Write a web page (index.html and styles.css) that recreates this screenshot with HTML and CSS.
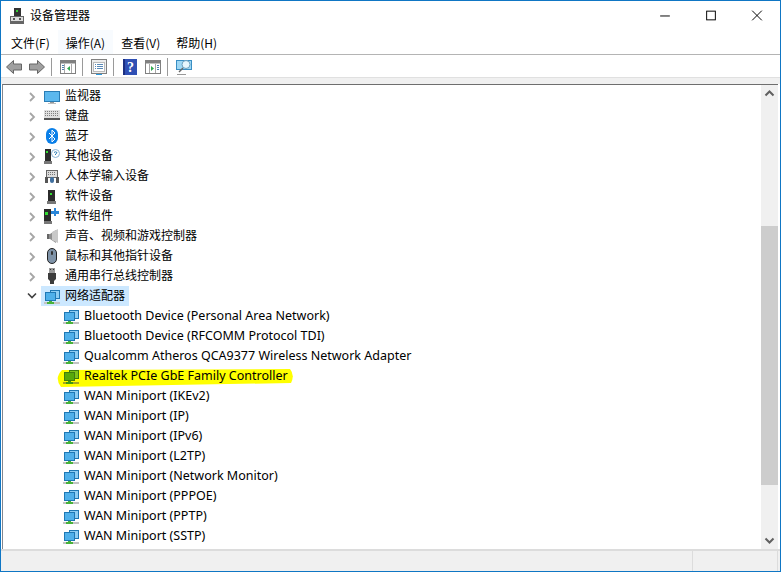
FILE: index.html
```html
<!DOCTYPE html>
<html lang="zh-CN">
<head>
  <meta charset="UTF-8">
  <title>设备管理器</title>
  <link rel="stylesheet" href="styles.css">
</head>
<body>
  <svg class="sprites" width="0" height="0">
    <symbol id="i-app" viewBox="0 0 16 16">
      <rect x="5" y="0" width="7" height="9" fill="#333"/>
      <rect x="7" y="2" width="2" height="2" fill="#3c3"/>
      <rect x="1" y="8" width="14" height="8" fill="#666"/>
      <rect x="2" y="9" width="12" height="4" fill="#ddd"/>
      <rect x="4" y="10" width="2" height="2" fill="#555"/>
      <rect x="10" y="10" width="2" height="2" fill="#555"/>
    </symbol>
    <symbol id="i-net" viewBox="0 0 16 16">
      <rect x="6.500" y="2.500" width="9" height="8" fill="#8ccdf3" stroke="#1f78b4"/>
      <rect x="1.500" y="4.500" width="10" height="8" fill="#4fb0ea" stroke="#1f78b4"/>
      <rect x="0" y="14" width="16" height="2" fill="#c4c4c4"/>
      <path d="M5 13h3v1h2v2H3v-2h2z" fill="#49b23c"/>
    </symbol>
    <symbol id="i-net-on" viewBox="0 0 16 16">
      <rect x="6.500" y="2.500" width="9" height="8" fill="#7fc31c" stroke="#3f7d0c"/>
      <rect x="1.500" y="4.500" width="10" height="8" fill="#58a80a" stroke="#3f7d0c"/>
      <rect x="0" y="14" width="16" height="2" fill="#a8a820"/>
      <path d="M5 13h3v1h2v2H3v-2h2z" fill="#3e9a10"/>
    </symbol>
    <symbol id="i-monitor" viewBox="0 0 16 16">
      <rect x=".5" y="3.500" width="15" height="10" fill="#5cb8ee" stroke="#2a7db5"/>
      <rect x="6" y="14" width="4" height="1" fill="#9a9a9a"/>
      <rect x="4" y="15" width="8" height="1" fill="#bdbdbd"/>
    </symbol>
    <symbol id="i-keyboard" viewBox="0 0 16 16">
      <rect x="0" y="2" width="16" height="8" fill="#e0e0e0"/>
      <path d="M1 3.500h14M1 5.500h14M1 7.500h14" stroke="#808080" stroke-dasharray="1 1"/>
      <rect x="0" y="10" width="16" height="2" fill="#555"/>
    </symbol>
    <symbol id="i-bt" viewBox="0 0 16 16">
      <rect x="2" y="0" width="12" height="16" rx="6" fill="#0a7fe8"/>
      <path d="M5 5l6 6-3 3V2l3 3-6 6" fill="none" stroke="#fff"/>
    </symbol>
    <symbol id="i-other" viewBox="0 0 16 16">
      <rect x="1" y="1" width="6" height="12" fill="#2b2b2b"/>
      <rect x="2" y="3" width="2" height="2" fill="#3d3"/>
      <rect x="0" y="13" width="8" height="3" fill="#777"/>
      <circle cx="11.500" cy="5.500" r="4" fill="#fff" stroke="#8ab4d6"/>
      <path d="M10 4.500q1.500-1.500 3 0q0 1-1.500 1.500v1" fill="none" stroke="#2a7db5"/>
    </symbol>
    <symbol id="i-hid" viewBox="0 0 16 16">
      <rect x="2.500" y="2.500" width="11" height="7" fill="#dcdcdc" stroke="#666"/>
      <path d="M4 4.500h8M4 6.500h8" stroke="#777" stroke-dasharray="1 1"/>
      <path d="M1 9h3v6H1zM12 9h3v6h-3z" fill="#555"/>
      <rect x="6" y="9" width="4" height="6" rx="2" fill="#3f6f9f"/>
    </symbol>
    <symbol id="i-soft" viewBox="0 0 16 16">
      <rect x="4" y="2" width="7" height="11" fill="#2b2b2b"/>
      <rect x="6" y="5" width="2" height="2" fill="#3d3"/>
      <rect x="3" y="13" width="9" height="3" fill="#777"/>
    </symbol>
    <symbol id="i-comp" viewBox="0 0 16 16">
      <rect x="0" y="1" width="7" height="12" fill="#2b2b2b"/>
      <rect x="1" y="4" width="3" height="3" fill="#3d3"/>
      <rect x="0" y="13" width="8" height="3" fill="#777"/>
      <path d="M10 0h2v3h3v3h-3v2h-2V6H7V3h3z" fill="#2a86d8"/>
    </symbol>
    <symbol id="i-sound" viewBox="0 0 16 16">
      <path d="M3 6h3l6-4v13l-6-4H3z" fill="#8e8e8e"/>
      <path d="M8 4l6-3v14l-6-3z" fill="#c8c8c8"/>
      <rect x="3" y="6" width="2" height="5" fill="#666"/>
    </symbol>
    <symbol id="i-mouse" viewBox="0 0 16 16">
      <rect x="3.500" y=".5" width="9" height="15" rx="4.500" fill="#7f93a8" stroke="#222"/>
      <rect x="7" y="3" width="2" height="4" rx="1" fill="#333"/>
    </symbol>
    <symbol id="i-usb" viewBox="0 0 16 16">
      <rect x="5" y="0" width="6" height="5" fill="#999"/>
      <rect x="6" y="1" width="1" height="1" fill="#333"/>
      <rect x="9" y="1" width="1" height="1" fill="#333"/>
      <path d="M4 5h8v6l-2 2v3H6v-3l-2-2z" fill="#3c3c3c"/>
    </symbol>
  </svg>

  <div class="window">
    <header class="titlebar">
      <svg class="app-icon"><use href="#i-app"/></svg>
      <span class="title">设备管理器</span>
      <div class="controls">
        <svg class="ctl" viewBox="0 0 46 30"><path d="M18 15.500h10" stroke="#000"/></svg>
        <svg class="ctl" viewBox="0 0 46 30"><rect x="18.500" y="10.500" width="9" height="9" fill="none" stroke="#000"/></svg>
        <svg class="ctl" viewBox="0 0 46 30"><path d="M18 10l10 10M28 10L18 20" stroke="#000" fill="none"/></svg>
      </div>
    </header>

    <nav class="menubar">
      <span class="menu">文件(F)</span>
      <span class="menu menu-hover">操作(A)</span>
      <span class="menu">查看(V)</span>
      <span class="menu">帮助(H)</span>
    </nav>

    <div class="toolbar">
      <svg class="tool" viewBox="0 0 16 14"><path d="M7.500.5v3.500h8v6h-8v3.500L.5 7z" fill="#a0a0a0" stroke="#666"/></svg>
      <svg class="tool gap-arrow" viewBox="0 0 16 14"><path d="M8.500.5v3.500h-8v6h8v3.500L15.500 7z" fill="#a0a0a0" stroke="#666"/></svg>
      <i class="sep"></i>
      <svg class="tool" viewBox="0 0 16 14"><rect x=".5" y=".5" width="15" height="13" fill="#fff" stroke="#808080"/><path d="M0 2h16" stroke="#808080" stroke-width="3"/><path d="M4.500 4v9M11.500 4v9" stroke="#a8a8a8"/><path d="M2 5.500h2M2 7.500h2M2 9.500h2" stroke="#4a7fb0"/><path d="M10 6v5L7 8.500z" fill="#2fa84f"/></svg>
      <i class="sep"></i>
      <svg class="tool tool-sheet" viewBox="0 0 16 16"><rect x=".5" y=".5" width="15" height="14" fill="#eee" stroke="#808080"/><rect x="2.500" y="3.500" width="11" height="9" fill="#fff" stroke="#bbb"/><path d="M4 5.500h1M6 5.500h6M4 7.500h1M6 7.500h6M4 9.500h1M6 9.500h6" stroke="#5a8ab8"/><rect x="5" y="15" width="6" height="1" fill="#2a9ae0"/></svg>
      <i class="sep"></i>
      <svg class="tool tool-help" viewBox="0 0 14 16"><rect width="14" height="16" fill="#2f4fb4"/><rect width="2" height="16" fill="#1c2f80"/><text x="7.500" y="13" class="help-mark">?</text></svg>
      <svg class="tool gap-help" viewBox="0 0 16 14"><rect x=".5" y=".5" width="15" height="13" fill="#fff" stroke="#808080"/><path d="M0 2h16" stroke="#808080" stroke-width="3"/><path d="M4.500 4v9M10.500 4v9" stroke="#a8a8a8"/><path d="M12 5.500h2M12 7.500h2M12 9.500h2" stroke="#4a7fb0"/><path d="M6 6v5l3-2.500z" fill="#2fa84f"/></svg>
      <i class="sep"></i>
      <svg class="tool tool-scan" viewBox="0 0 16 16"><rect x=".5" y="1.500" width="15" height="9" fill="#9fd8f5" stroke="#3a8fc4"/><circle cx="10" cy="5.500" r="4" fill="#e6f6fd" stroke="#6a9fbe"/><path d="M7 9l-4 4" stroke="#666" stroke-width="1.500"/><path d="M1 15.500h9" stroke="#999"/></svg>
    </div>
    <div class="toolbar-gap"></div>

    <main class="content">
      <ul class="tree">
        <li class="row"><svg class="chev" viewBox="0 0 8 10"><path d="M2 1l4 4-4 4"/></svg><svg class="icon"><use href="#i-monitor"/></svg><span class="label">监视器</span></li>
        <li class="row"><svg class="chev" viewBox="0 0 8 10"><path d="M2 1l4 4-4 4"/></svg><svg class="icon"><use href="#i-keyboard"/></svg><span class="label">键盘</span></li>
        <li class="row"><svg class="chev" viewBox="0 0 8 10"><path d="M2 1l4 4-4 4"/></svg><svg class="icon"><use href="#i-bt"/></svg><span class="label">蓝牙</span></li>
        <li class="row"><svg class="chev" viewBox="0 0 8 10"><path d="M2 1l4 4-4 4"/></svg><svg class="icon"><use href="#i-other"/></svg><span class="label">其他设备</span></li>
        <li class="row"><svg class="chev" viewBox="0 0 8 10"><path d="M2 1l4 4-4 4"/></svg><svg class="icon"><use href="#i-hid"/></svg><span class="label">人体学输入设备</span></li>
        <li class="row"><svg class="chev" viewBox="0 0 8 10"><path d="M2 1l4 4-4 4"/></svg><svg class="icon"><use href="#i-soft"/></svg><span class="label">软件设备</span></li>
        <li class="row"><svg class="chev" viewBox="0 0 8 10"><path d="M2 1l4 4-4 4"/></svg><svg class="icon"><use href="#i-comp"/></svg><span class="label">软件组件</span></li>
        <li class="row"><svg class="chev" viewBox="0 0 8 10"><path d="M2 1l4 4-4 4"/></svg><svg class="icon"><use href="#i-sound"/></svg><span class="label">声音、视频和游戏控制器</span></li>
        <li class="row"><svg class="chev" viewBox="0 0 8 10"><path d="M2 1l4 4-4 4"/></svg><svg class="icon"><use href="#i-mouse"/></svg><span class="label">鼠标和其他指针设备</span></li>
        <li class="row"><svg class="chev" viewBox="0 0 8 10"><path d="M2 1l4 4-4 4"/></svg><svg class="icon"><use href="#i-usb"/></svg><span class="label">通用串行总线控制器</span></li>
        <li class="row"><svg class="chev chev-open" viewBox="0 0 10 8"><path d="M1 1.500l4 4 4-4"/></svg><span class="selected"><svg class="icon"><use href="#i-net"/></svg><span class="label">网络适配器</span></span></li>
        <li class="row child"><svg class="icon"><use href="#i-net"/></svg><span class="label">Bluetooth Device (Personal Area Network)</span></li>
        <li class="row child"><svg class="icon"><use href="#i-net"/></svg><span class="label">Bluetooth Device (RFCOMM Protocol TDI)</span></li>
        <li class="row child"><svg class="icon"><use href="#i-net"/></svg><span class="label">Qualcomm Atheros QCA9377 Wireless Network Adapter</span></li>
        <li class="row child marked">
          <svg class="marker" viewBox="0 0 238 20"><path d="M6 3L234 2Q239 8 235 16L5 20Q-2 11 6 3z" fill="#ffff00"/></svg>
          <svg class="icon"><use href="#i-net-on"/></svg><span class="label">Realtek PCIe GbE Family Controller</span>
        </li>
        <li class="row child"><svg class="icon"><use href="#i-net"/></svg><span class="label">WAN Miniport (IKEv2)</span></li>
        <li class="row child"><svg class="icon"><use href="#i-net"/></svg><span class="label">WAN Miniport (IP)</span></li>
        <li class="row child"><svg class="icon"><use href="#i-net"/></svg><span class="label">WAN Miniport (IPv6)</span></li>
        <li class="row child"><svg class="icon"><use href="#i-net"/></svg><span class="label">WAN Miniport (L2TP)</span></li>
        <li class="row child"><svg class="icon"><use href="#i-net"/></svg><span class="label">WAN Miniport (Network Monitor)</span></li>
        <li class="row child"><svg class="icon"><use href="#i-net"/></svg><span class="label">WAN Miniport (PPPOE)</span></li>
        <li class="row child"><svg class="icon"><use href="#i-net"/></svg><span class="label">WAN Miniport (PPTP)</span></li>
        <li class="row child"><svg class="icon"><use href="#i-net"/></svg><span class="label">WAN Miniport (SSTP)</span></li>
      </ul>
      <div class="scrollbar">
        <svg class="arrow" viewBox="0 0 17 17"><path d="M4.500 10.500l4-4 4 4"/></svg>
        <div class="track"><div class="thumb"></div></div>
        <svg class="arrow" viewBox="0 0 17 17"><path d="M4.500 6.500l4 4 4-4"/></svg>
      </div>
    </main>

    <footer class="statusbar">
      <div class="status-main"></div>
      <div class="status-cell"></div>
    </footer>
  </div>
</body>
</html>
```

FILE: styles.css
```css
html, body {
  margin: 0;
  padding: 0;
  height: 100%;
  background: #fff;
}
.sprites { position: absolute; }

.window {
  width: 781px;
  height: 572px;
  box-sizing: border-box;
  border: 1px solid #0f76c4;
  display: flex;
  flex-direction: column;
  font-family: "Noto Sans CJK SC", "DejaVu Sans", sans-serif;
  font-size: 12px;
  color: #000;
  overflow: hidden;
}

.titlebar {
  height: 29px;
  display: flex;
  align-items: center;
  flex: none;
}
.app-icon {
  width: 16px;
  height: 16px;
  margin-left: 8px;
  margin-right: 5px;
}
.title {
  line-height: 29px;
  margin-bottom: 2px;
}
.controls {
  margin-left: auto;
  display: flex;
}
.ctl {
  width: 46px;
  height: 29px;
  display: block;
}

.menubar {
  height: 24px;
  display: flex;
  flex: none;
  padding-left: 2px;
  border-bottom: 1px solid #b4b4b4;
}
.menu {
  padding: 0 8px;
  line-height: 25px;
}
.menu-hover { background: #f8fbfe; }

.toolbar {
  height: 22px;
  box-sizing: border-box;
  padding: 2px 0 0 5px;
  flex: none;
  display: flex;
  align-items: center;
}
.tool {
  width: 16px;
  height: 14px;
  flex: none;
}
.tool-sheet { height: 16px; }
.tool-help { width: 14px; height: 16px; margin-left: 1px; }
.tool-scan { height: 16px; }
.gap-arrow { margin-left: 7px; }
.gap-help { margin-left: 8px; }
.help-mark {
  font-family: "Liberation Serif", serif;
  font-size: 14px;
  font-weight: bold;
  fill: #fff;
  text-anchor: middle;
}
.sep {
  width: 1px;
  height: 18px;
  background: #9a9a9a;
  margin: 0 8px 0 6px;
  flex: none;
}

.toolbar-gap {
  height: 6px;
  flex: none;
  background: #f0f0f0;
  border-top: 1px solid #e0e0e0;
}

.content {
  flex: 1;
  min-height: 0;
  display: flex;
  margin: 0 2px 0 1px;
  border-top: 1px solid #6e6e6e;
  border-left: 1px solid #828790;
}

.tree {
  list-style: none;
  margin: 0;
  padding: 1px 0 0;
  flex: 1;
  overflow: hidden;
}
.row {
  height: 20px;
  display: flex;
  align-items: center;
  padding-left: 25px;
  white-space: nowrap;
}
.row.child { padding-left: 60px; }
.marked { position: relative; z-index: 0; }
.marker {
  position: absolute;
  left: 53px;
  top: 1px;
  width: 238px;
  height: 20px;
  z-index: -1;
  overflow: visible;
}
.chev {
  width: 8px;
  height: 10px;
  flex: none;
  margin: 2px 8px 0 0;
  fill: none;
  stroke: #a6a6a6;
  stroke-width: 1.8;
}
.chev-open {
  width: 10px;
  height: 8px;
  margin: 0 4px 0 -1px;
  stroke: #404040;
  stroke-width: 1.6;
}
.icon {
  width: 16px;
  height: 16px;
  flex: none;
  margin-right: 5px;
}
.label { margin-bottom: 4px; }
.selected {
  display: flex;
  align-items: center;
  height: 20px;
  padding: 0 4px 0 3px;
  background: #cce8ff;
}
.child .label {
  font-family: "Noto Sans", sans-serif;
  font-size: 12.5px;
  margin-bottom: 2px;
}

.scrollbar {
  width: 17px;
  flex: none;
  background: #f0f0f0;
  display: flex;
  flex-direction: column;
}
.arrow {
  width: 17px;
  height: 17px;
  flex: none;
  fill: none;
  stroke: #606060;
  stroke-width: 2;
}
.track { flex: 1; padding-top: 124px; }
.thumb { height: 259px; background: #cdcdcd; }

.statusbar {
  height: 22px;
  flex: none;
  display: flex;
  background: #f0f0f0;
  border-top: 2px solid #dcdcdc;
  box-sizing: border-box;
}
.status-main { width: 691px; border-right: 1px solid #dcdcdc; }
.status-cell { width: 84px; border-right: 1px solid #dcdcdc; }
```
